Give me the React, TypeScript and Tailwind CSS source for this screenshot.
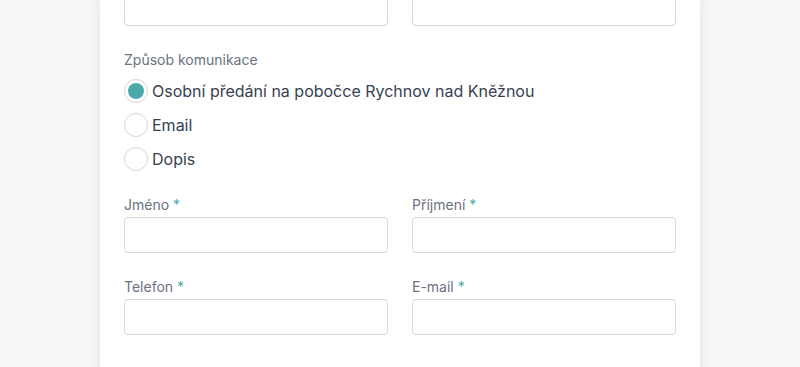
import { useState } from "react";

const FONT = { fontFamily: "Inter, 'Noto Sans', sans-serif" };

type Option = { id: string; label: string };

const OPTIONS: Option[] = [
  { id: "pobocka", label: "Osobní předání na pobočce Rychnov nad Kněžnou" },
  { id: "email", label: "Email" },
  { id: "dopis", label: "Dopis" },
];

function Field({ label, required }: { label?: string; required?: boolean }) {
  return (
    <div className="flex flex-col">
      {label && (
        <label className="mb-0.5 h-5 text-sm leading-5 text-[#6b7280]">
          {label}
          {required && <span className="ml-1 text-[#4aa9a9]">*</span>}
        </label>
      )}
      <input
        type="text"
        className="h-9 w-full rounded border border-[#d4d6dc] bg-white px-3 text-sm text-[#374151] outline-none"
      />
    </div>
  );
}

function Radio({ option, checked, onSelect }: { option: Option; checked: boolean; onSelect: () => void }) {
  return (
    <button type="button" onClick={onSelect} className="flex h-6 items-center gap-1 text-left">
      <span className="flex h-6 w-6 shrink-0 items-center justify-center rounded-full border border-[#d4d6dc] bg-white">
        {checked && <span className="h-4 w-4 rounded-full bg-[#4aa9a9]" />}
      </span>
      <span className="text-base text-[#374151]">{option.label}</span>
    </button>
  );
}

export default function App() {
  const [selected, setSelected] = useState("pobocka");

  return (
    <div style={FONT} className="h-[367px] overflow-hidden bg-[#f5f6f8]">
      <div className="mx-auto w-[600px] bg-white px-6 pt-px pb-24 shadow-[0_0_12px_rgba(0,0,0,0.08)]">
        {/* row cut off at the top */}
        <div className="-mt-[11px] grid grid-cols-2 gap-6">
          <Field />
          <Field />
        </div>

        {/* communication method */}
        <div className="mt-6">
          <div className="h-5 text-sm leading-5 text-[#6b7280]">Způsob komunikace</div>
          <div className="mt-[9px] flex flex-col gap-[10px]">
            {OPTIONS.map((o) => (
              <Radio key={o.id} option={o} checked={selected === o.id} onSelect={() => setSelected(o.id)} />
            ))}
          </div>
        </div>

        <div className="mt-6 grid grid-cols-2 gap-x-6 gap-y-6">
          <Field label="Jméno" required />
          <Field label="Příjmení" required />
          <Field label="Telefon" required />
          <Field label="E-mail" required />
        </div>
      </div>
    </div>
  );
}
